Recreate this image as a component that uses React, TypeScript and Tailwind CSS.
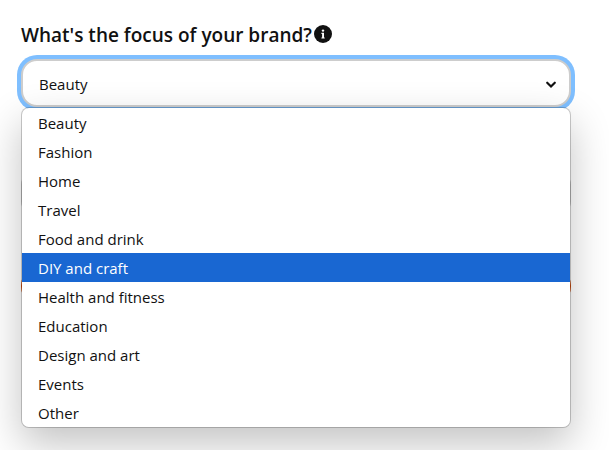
import { useState } from "react";

const FOCUSES = [
    "Beauty",
    "Fashion",
    "Home",
    "Travel",
    "Food and drink",
    "DIY and craft",
    "Health and fitness",
    "Education",
    "Design and art",
    "Events",
    "Other",
];

function InfoIcon() {
    return (
        <svg viewBox="0 0 18 18" className="size-[18px]" aria-hidden="true">
            <circle cx="9" cy="9" r="9" fill="#111111" />
            <circle cx="9" cy="5.6" r="1.2" fill="#ffffff" />
            <path d="M7.4 7.8h2.6v4.6h.7v1.2H7.4v-1.2h.7V9h-.7z" fill="#ffffff" />
        </svg>
    );
}

function Chevron() {
    return (
        <svg
            viewBox="0 0 12 8"
            className="pointer-events-none absolute right-[14px] top-[22px] h-2 w-3"
            fill="none"
            stroke="#111111"
            strokeWidth="2.2"
            strokeLinecap="round"
            aria-hidden="true"
        >
            <path d="M2.2 1.7 6 5.5 9.8 1.7" />
        </svg>
    );
}

export default function App() {
    const [focus, setFocus] = useState("Beauty");
    const [active, setActive] = useState("DIY and craft");

    return (
        <main className="h-screen overflow-hidden bg-white pt-[22px] pr-[38px] pl-[21px] font-['Open_Sans','Noto_Sans',sans-serif] text-[15px] text-[#111111]">
            <div className="mb-[11px] flex h-[26px] items-center gap-0.5">
                <label htmlFor="focus" className="text-[19px] leading-[26px] font-semibold">
                    What's the focus of your brand?
                </label>
                <button type="button" aria-label="More information" className="mb-0.5">
                    <InfoIcon />
                </button>
            </div>

            <div className="relative">
                <select
                    id="focus"
                    value={focus}
                    onChange={(e) => setFocus(e.target.value)}
                    className="block h-12 w-full appearance-none rounded-2xl border-2 border-[#cdcdcd] bg-white px-4 pt-0.5 ring-4 ring-[#7fbfff] outline-none"
                >
                    {FOCUSES.map((name) => (
                        <option key={name}>{name}</option>
                    ))}
                </select>
                <Chevron />

                <ul
                    role="listbox"
                    aria-labelledby="focus"
                    className="absolute inset-x-0 top-full z-10 overflow-hidden rounded-lg border border-black/20 bg-white bg-clip-padding shadow-[0_16px_40px_rgba(0,0,0,0.24)]"
                >
                    {FOCUSES.map((name) => (
                        <li
                            key={name}
                            role="option"
                            aria-selected={name === active}
                            onMouseEnter={() => setActive(name)}
                            onClick={() => setFocus(name)}
                            className="h-[29px] px-4 leading-[31px] aria-selected:bg-[#1967d2] aria-selected:text-white"
                        >
                            {name}
                        </li>
                    ))}
                </ul>
            </div>

            {/* rest of the form, under the open list */}
            <input
                type="text"
                aria-label="Website"
                className="mt-[62px] block h-12 w-full rounded-2xl border-2 border-[#cdcdcd] px-4"
            />
            <button
                type="button"
                aria-label="Next"
                className="mt-[45px] block h-12 w-full rounded-full bg-[#e04a00]"
            />
        </main>
    );
}
